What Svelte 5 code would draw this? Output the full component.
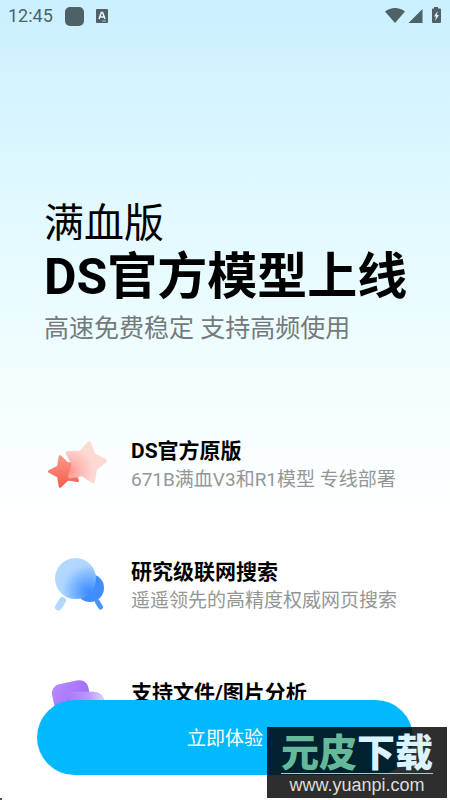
<script>
  const features = [
    { icon: 'stars', title: 'DS官方原版', text: '671B满血V3和R1模型 专线部署' },
    { icon: 'search', title: '研究级联网搜索', text: '遥遥领先的高精度权威网页搜索' },
    { icon: 'files', title: '支持文件/图片分析', text: '' }
  ];
</script>

<div class="screen">
  <header class="status">
    <span class="time">12:45</span>
    <span class="app"></span>
    <svg class="letter" width="12" height="14" viewBox="0 0 12 14">
      <rect width="12" height="14" rx="1" fill="#4d6167" />
      <path d="M3 10 5.4 3.5h1.2L9 10M4 8h4" fill="none" stroke="#e4f8ff" stroke-width="1.5" />
      <path d="M6 12h4" stroke="#a9c3cb" stroke-width="1" />
    </svg>
    <svg class="signals" width="58" height="18" viewBox="0 0 58 18" fill="#4d6167">
      <path d="M1 4.500C6.500-.3 15.500-.3 21 4.500L11 16z" />
      <path d="M38.500 2v14H24.500z" />
      <path d="M50 0h4v1.500h2q1 0 1 1V15q0 1-1 1h-7q-1 0-1-1V2.500q0-1 1-1h1z" />
      <path d="M53.500 4 50 9.500h2L51 14l4-6h-2z" fill="#d2f2ff" />
    </svg>
  </header>

  <main>
    <h1>
      <span class="light">满血版</span>
      <span class="strong">DS官方模型上线</span>
    </h1>
    <p class="lead">高速免费稳定 支持高频使用</p>

    <ul>
      {#each features as f}
        <li>
          <svg class="icon" width="64" height="64" viewBox="0 0 64 64">
            {#if f.icon === 'stars'}
              <defs>
                <linearGradient id="red" x1="0" y1="0" x2="0" y2="1">
                  <stop offset="0" stop-color="#fb9685" /><stop offset="1" stop-color="#f85f50" />
                </linearGradient>
                <radialGradient id="pink" gradientUnits="userSpaceOnUse" cx="23" cy="36" r="24">
                  <stop offset="0" stop-color="#fd958c" /><stop offset=".45" stop-color="#feb9b3" /><stop offset="1" stop-color="#fdd9d4" />
                </radialGradient>
              </defs>
              <path d="M2.500 36.500 11.500 31.800 13.200 21.800 20.500 28.900 30.500 27.400 26 36.500 30.500 45.600 20.500 44.100 13.200 51.200 11.500 41.200z" fill="url(#red)" stroke="url(#red)" stroke-width="3" stroke-linejoin="round" />
              <path d="M42.200 8.400 46.500 20 57.900 25.900 48 34 46.100 46.300 35.800 39.300 23.100 41.400 26.600 29.100 20.700 18 33.700 17.500z" fill="url(#pink)" stroke="url(#pink)" stroke-width="4" stroke-linejoin="round" />
            {:else if f.icon === 'search'}
              <defs>
                <radialGradient id="lens" gradientUnits="userSpaceOnUse" cx="42" cy="36" r="32">
                  <stop offset="0" stop-color="#3b8cff" /><stop offset=".35" stop-color="#66a9ff" /><stop offset=".85" stop-color="#afd5ff" /><stop offset="1" stop-color="#b3d8ff" />
                </radialGradient>
              </defs>
              <path d="M15.500 44.500 11.500 51" stroke="#b3d8ff" stroke-width="7" stroke-linecap="round" />
              <path d="M50.500 46 53.500 51" stroke="#4a94fb" stroke-width="5" stroke-linecap="round" />
              <circle cx="43" cy="32" r="14" fill="#3f8efc" />
              <circle cx="28.500" cy="22.500" r="20.500" fill="url(#lens)" />
            {:else}
              <defs>
                <linearGradient id="sheet" x1="0" y1="0" x2="1" y2="1">
                  <stop offset="0" stop-color="#b98bff" /><stop offset="1" stop-color="#9362f5" />
                </linearGradient>
                <linearGradient id="glass" x1="0" y1="0" x2="1" y2="0">
                  <stop offset="0" stop-color="#a873fb" /><stop offset=".6" stop-color="#b998fb" /><stop offset="1" stop-color="#e2d2ff" />
                </linearGradient>
              </defs>
              <rect x="7" y="5" width="37" height="40" rx="9" transform="rotate(-12 25 25)" fill="url(#sheet)" />
              <rect x="18" y="15" width="39" height="34" rx="10" fill="url(#glass)" stroke="#bd94ff" stroke-opacity=".5" stroke-width="1" />
            {/if}
          </svg>
          <div>
            <h2>{f.title}</h2>
            <p>{f.text}</p>
          </div>
        </li>
      {/each}
    </ul>
  </main>

  <button type="button">立即体验</button>

  <aside>
    <strong><span>元皮</span>下载</strong>
    <small>www.yuanpi.com</small>
  </aside>
</div>

<style>
  :global(body) {
    margin: 0;
  }
  .screen {
    position: relative;
    box-sizing: border-box;
    height: 100vh;
    overflow: hidden;
    background: linear-gradient(#caefff 0, #e0f9ff 25%, #f0fdff 45%, #fff 65%);
    font-family: Roboto, 'Noto Sans CJK SC', sans-serif;
    color: #000;
  }
  .screen::after {
    content: '';
    position: absolute;
    bottom: 0;
    left: 0;
    width: 2px;
    height: 2px;
    background: #555;
  }
  .status {
    display: flex;
    align-items: center;
    height: 32px;
    padding: 0 8px;
    color: #4d6167;
  }
  .time {
    font-size: 18px;
    line-height: 32px;
  }
  .app {
    width: 19px;
    height: 19px;
    margin: 0 12px;
    border-radius: 5px;
    background: #4d6167;
  }
  .signals {
    margin-left: auto;
  }
  main {
    padding: 165px 20px 0 44px;
  }
  h1,
  h2,
  p,
  ul {
    margin: 0;
    padding: 0;
  }
  h1 span {
    display: block;
    white-space: nowrap;
  }
  .light {
    font-size: 40px;
    line-height: 54px;
    font-weight: 400;
  }
  .strong {
    font-size: 50px;
    line-height: 52px;
    font-weight: 700;
  }
  .lead {
    font-size: 25px;
    line-height: 52px;
    font-weight: 400;
    color: #747a7b;
  }
  ul {
    list-style: none;
    padding-top: 80px;
  }
  li {
    display: flex;
    gap: 20px;
    height: 121px;
    padding-left: 3px;
  }
  .icon {
    flex: none;
  }
  h2 {
    font-size: 21px;
    line-height: 32px;
    font-weight: 700;
  }
  li p {
    font-size: 19px;
    line-height: 26px;
    font-weight: 400;
    color: #949696;
    white-space: nowrap;
  }
  button {
    position: absolute;
    right: 37px;
    bottom: 25px;
    left: 37px;
    height: 75px;
    border: 0;
    border-radius: 38px;
    background: #00b9ff;
    color: #fff;
    font: 400 19px/75px Roboto, 'Noto Sans CJK SC', sans-serif;
  }
  aside {
    position: absolute;
    right: 3px;
    bottom: 2px;
    display: flex;
    flex-direction: column;
    align-items: center;
    width: 180px;
    height: 71px;
    background: rgba(0, 0, 0, 0.82);
    color: #d9f3ff;
  }
  strong {
    margin-top: 7px;
    border-bottom: 1px solid #a8c9cb;
    font-size: 38px;
    line-height: 39px;
    font-weight: 900;
  }
  strong span {
    color: #65b99b;
  }
  small {
    font: 18px/22px 'Liberation Sans', sans-serif;
    color: #ddd;
  }
</style>
